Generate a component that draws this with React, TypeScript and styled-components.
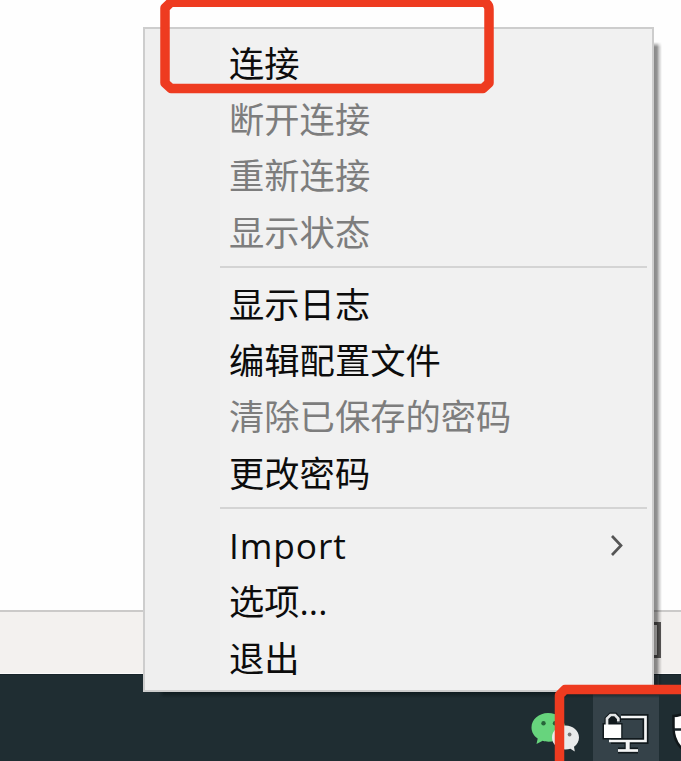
import React from "react";
import styled, { createGlobalStyle } from "styled-components";

const Global = createGlobalStyle`
  * { box-sizing: border-box; }
  body { margin: 0; overflow: hidden; background: #fff; }
`;

const Desktop = styled.div`
  position: relative;
  display: flex;
  flex-direction: column;
  width: 681px;
  height: 761px;
  overflow: hidden;
  background: #fefefe;
  font-family: "Open Sans", "Noto Sans CJK SC", sans-serif;
`;

const WindowBody = styled.div`
  flex: 1;
`;

const StatusBar = styled.div`
  display: flex;
  justify-content: flex-end;
  align-items: flex-start;
  height: 64px;
  padding: 10px 20px 0 0;
  background: #f3f1ef;
  border-top: 2px solid #cbcac9;
  border-bottom: 1px solid #fbfafa;
`;

const StatusBox = styled.div`
  width: 30px;
  height: 36px;
  border: 3px solid #5c5a59;
  border-right-width: 4px;
`;

const Taskbar = styled.div`
  display: flex;
  height: 87px;
  padding-left: 528px;
  background: #1f2d32;
  border-top: 1px solid #17242a;
`;

const TraySlot = styled.div<{ $width: number; $active?: boolean }>`
  flex: none;
  width: ${(p) => p.$width}px;
  height: 100%;
  background: ${(p) => (p.$active ? "#354249" : "transparent")};
  svg { display: block; }
`;

const Menu = styled.div`
  position: absolute;
  left: 143px;
  top: 27px;
  width: 511px;
  height: 665px;
  padding: 6.8px 0 0;
  border: 2px solid #cdcdcd;
  background: linear-gradient(90deg, #efefef 75px, #f1f1f1 75px);

  &::before {
    content: "";
    position: absolute;
    left: 509px;
    top: 13px;
    width: 8px;
    height: 650px;
    background: linear-gradient(90deg, rgba(0, 0, 0, 0.46) 0, rgba(0, 0, 0, 0.42) 3px, rgba(0, 0, 0, 0.2) 5px, rgba(0, 0, 0, 0) 8px);
    mask-image: linear-gradient(transparent, #000 5px);
  }
  &::after {
    content: "";
    position: absolute;
    left: 14px;
    top: 663px;
    width: 500px;
    height: 6px;
    background: linear-gradient(#101c20, rgba(20, 31, 36, 0));
    mask-image: linear-gradient(90deg, transparent, #000 5px);
  }
`;

const MenuItem = styled.div<{ $disabled?: boolean }>`
  display: flex;
  align-items: center;
  justify-content: space-between;
  height: 56.4px;
  padding: 0 28px 0 84px;
  font-size: 35.3px;
  line-height: 56px;
  white-space: nowrap;
  color: ${(p) => (p.$disabled ? "#7d7d7d" : "#0c0c0c")};
`;

const Label = styled.span<{ $latin?: boolean }>`
  padding-bottom: 3px;
  letter-spacing: ${(p) => (p.$latin ? "0.9px" : "normal")};
`;

const Separator = styled.div`
  height: 15.6px;
  padding: 4.5px 5px 0 75px;
  &::before {
    content: "";
    display: block;
    height: 2px;
    background: #d4d4d4;
  }
`;

const Highlight = styled.div<{ $x: number; $y: number; $w: number; $h: number }>`
  position: absolute;
  left: ${(p) => p.$x}px;
  top: ${(p) => p.$y}px;
  width: ${(p) => p.$w}px;
  height: ${(p) => p.$h}px;
  svg { display: block; }
`;

type Entry = { label: string; disabled?: boolean; submenu?: boolean; latin?: boolean };

const groups: Entry[][] = [
  [
    { label: "连接" },
    { label: "断开连接", disabled: true },
    { label: "重新连接", disabled: true },
    { label: "显示状态", disabled: true },
  ],
  [
    { label: "显示日志" },
    { label: "编辑配置文件" },
    { label: "清除已保存的密码", disabled: true },
    { label: "更改密码" },
  ],
  [{ label: "Import", submenu: true, latin: true }, { label: "选项..." }, { label: "退出" }],
];

const Chevron = () => (
  <svg width="14" height="24" viewBox="0 0 14 24" fill="none" stroke="#555" strokeWidth="2.7">
    <path d="M2 2 11 11.500 2 21" />
  </svg>
);

const ChatIcon = () => (
  <svg width="65" height="86" viewBox="528 675 65 86">
    <path fill="#67d47d" d="M548 713c-9 0-16.500 6.400-16.500 14.500 0 4.700 2.500 8.500 6.200 11.100l-1.200 5.400 6.200-3.200c2.200.7 3.600.9 5.800.9 9 0 16.500-6 16.500-14.200S557 713 548 713Z" />
    <path fill="#e9ebeb" d="M565.500 725.500c-7.500 0-13.500 5.300-13.500 12s6 12 13.500 12c1.800 0 3.400-.3 4.900-.8l4.400 2.800-.8-4.700c3.100-2.200 5-5.400 5-9.300 0-6.700-6-12-13.500-12Z" />
    <circle cx="543.500" cy="723.300" r="2.200" fill="#27643a" />
    <circle cx="555" cy="723.300" r="2.200" fill="#27643a" />
    <circle cx="561" cy="734.500" r="1.700" fill="#888" />
    <circle cx="569.600" cy="734.500" r="1.900" fill="#777" />
  </svg>
);

const VpnIcon = () => (
  <svg width="66" height="86" viewBox="593 675 66 86" fill="none">
    <g stroke="#11191d" strokeWidth="6">
      <path d="M621 717h24.500v24H611M627.500 741v9M618 750.500h20" />
      <path d="M607.500 725v-6l3.500-3.500h4l3 3.500v3" />
      <path d="M605.500 726h14v10.500h-14Z" />
    </g>
    <path d="M608 716h9v9h-9Z" fill="#11191d" />
    <path d="M621 717h24.500v24H609" stroke="#f4f5f5" strokeWidth="2.700" />
    <path d="M627.700 741v9" stroke="#f4f5f5" strokeWidth="4" />
    <path d="M618 750.500h20" stroke="#f4f5f5" strokeWidth="2.700" />
    <path d="M607 725v-6.500l3.500-3.500h4.500l3.300 3.500v3" stroke="#e3e5e6" strokeWidth="2.700" />
    <path d="M604 724.500h17.200v13.500H604Z" fill="#fff" />
  </svg>
);

const ShieldIcon = () => (
  <svg width="22" height="86" viewBox="659 675 22 86">
    <path d="M673.500 716q5 0 11.500-3v38q-11.500-8-11.500-24Z" fill="#fff" stroke="#10171a" strokeWidth="2.500" />
    <path d="M674 729.500h8" stroke="#172126" strokeWidth="2.500" />
  </svg>
);

export default function App() {
  return (
    <Desktop>
      <Global />
      <WindowBody />
      <StatusBar>
        <StatusBox />
      </StatusBar>
      <Taskbar>
        <TraySlot $width={65}><ChatIcon /></TraySlot>
        <TraySlot $width={66} $active><VpnIcon /></TraySlot>
        <TraySlot $width={22}><ShieldIcon /></TraySlot>
      </Taskbar>
      <Menu>
        {groups.map((group, i) => (
          <React.Fragment key={i}>
            {i > 0 && <Separator />}
            {group.map((item) => (
              <MenuItem key={item.label} $disabled={item.disabled}>
                <Label $latin={item.latin}>{item.label}</Label>
                {item.submenu && <Chevron />}
              </MenuItem>
            ))}
          </React.Fragment>
        ))}
      </Menu>
      <Highlight $x={160} $y={0} $w={335} $h={95}>
        <svg width="335" height="95" fill="none" stroke="#ee3b20" strokeWidth="9.500">
          <path d="M11 2.200H324Q329 4 329 9V83L323 88.500H11L5 83V8Z" strokeLinejoin="round" />
        </svg>
      </Highlight>
      <Highlight $x={554} $y={684} $w={127} $h={77}>
        <svg width="127" height="77" fill="none" stroke="#ee3b20" strokeWidth="9.500">
          <path d="M5.500 80V11L11 5.500H130" strokeLinejoin="round" />
        </svg>
      </Highlight>
    </Desktop>
  );
}
